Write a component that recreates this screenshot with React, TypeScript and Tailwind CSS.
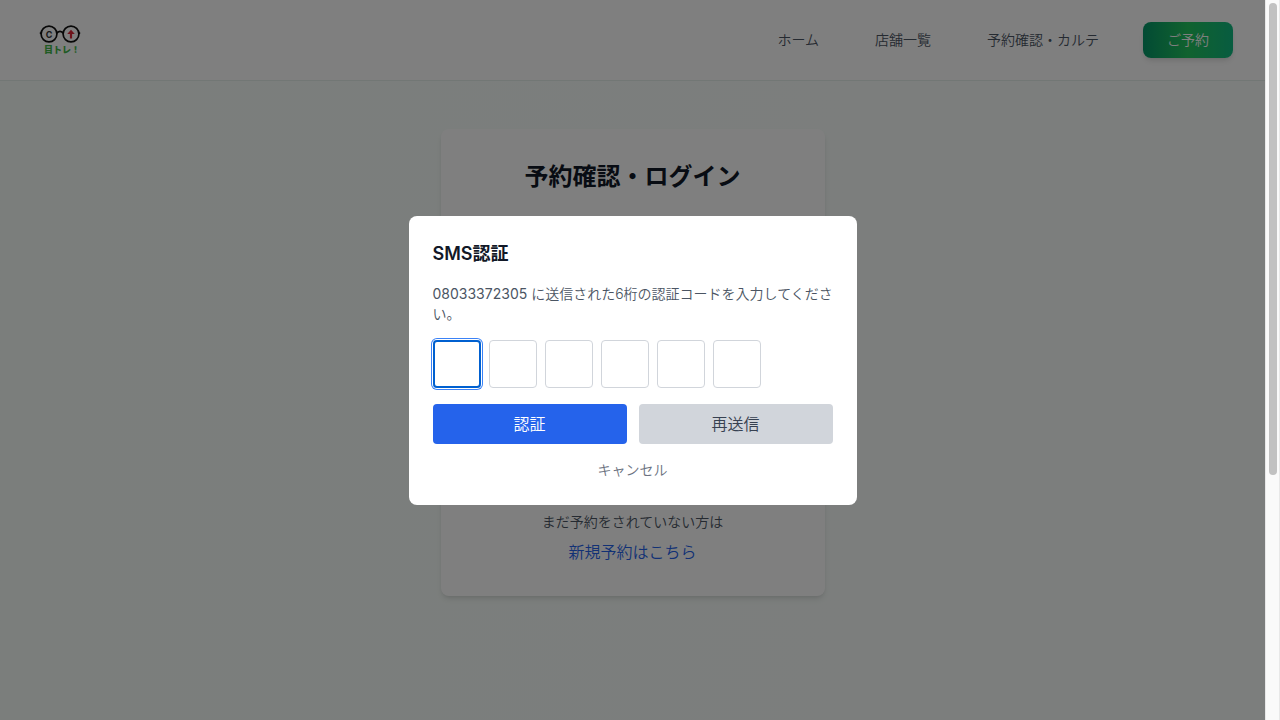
const navLinks = ['ホーム', '店舗一覧', '予約確認・カルテ'];

function Logo() {
  return (
    <svg viewBox="0 0 48 36" className="h-9 w-12" role="img" aria-label="目トレ！">
      <g fill="none" stroke="#111" strokeWidth="1.7">
        <circle cx="13" cy="12" r="7.9" />
        <circle cx="35" cy="12" r="7.9" />
        <path d="M20.8 11.3C22 8.6 26 8.6 27.2 11.3M5.2 11.2H3.8M42.8 11.2h1.4" />
      </g>
      <text x="13" y="15.6" textAnchor="middle" fontSize="9" fontWeight="700" fill="#333">
        C
      </text>
      <path d="M35 7.8l3.8 4.2h-2.7v4.4h-2.2V12h-2.7z" fill="#dc2637" />
      <text x="8" y="31" fontSize="9" fontWeight="900" fill="#42b649">
        目トレ！
      </text>
    </svg>
  );
}

function Header() {
  return (
    <header className="flex h-[81px] items-center justify-between border-b border-[#e5efea] bg-white px-8">
      <a href="#" className="pl-1">
        <Logo />
      </a>
      <nav className="flex items-center gap-8 text-sm text-[#4b5563]">
        {navLinks.map((label) => (
          <a key={label} href="#" className="px-3 py-2">
            {label}
          </a>
        ))}
        <button
          type="button"
          className="h-9 rounded-lg bg-[linear-gradient(to_right,#059669,#22c55e,#10b981)] px-6 text-white shadow-md"
        >
          ご予約
        </button>
      </nav>
    </header>
  );
}

function LoginCard() {
  return (
    <section className="flex min-h-[467px] w-96 flex-col justify-between rounded-lg bg-white p-8 text-center shadow-md">
      <h1 className="text-2xl font-bold text-[#111827]">予約確認・ログイン</h1>
      <div>
        <p className="mb-2 text-sm text-[#4b5563]">まだ予約をされていない方は</p>
        <a href="#" className="text-[#2563eb]">
          新規予約はこちら
        </a>
      </div>
    </section>
  );
}

function CodeInputs() {
  return (
    <div className="mb-4 flex gap-2">
      {[1, 2, 3, 4, 5, 6].map((n) => (
        <input
          key={n}
          type="text"
          inputMode="numeric"
          maxLength={1}
          aria-label={String(n)}
          className={
            n === 1
              ? 'size-12 rounded border-2 border-[#0060d0] text-center text-xl shadow-[0_0_0_1px_#fff,0_0_0_2px_#3b82f6] outline-none'
              : 'size-12 rounded border border-[#d1d5db] text-center text-xl outline-none'
          }
        />
      ))}
    </div>
  );
}

function SmsDialog() {
  return (
    <div className="absolute inset-0 flex items-center justify-center bg-black/50">
      <div
        role="dialog"
        aria-modal="true"
        aria-labelledby="sms-title"
        className="w-full max-w-md rounded-lg bg-white p-6"
      >
        <h2 id="sms-title" className="mb-4 text-lg font-semibold text-[#111827]">
          SMS認証
        </h2>
        <p className="mb-4 text-sm whitespace-nowrap text-[#4b5563]">
          <span className="font-normal">08033372305</span> に送信された6桁の認証コードを入力してくださ
          <br />
          い。
        </p>
        <CodeInputs />
        <div className="mb-4 flex gap-3">
          <button type="button" className="h-10 flex-1 rounded bg-[#2563eb] text-white">
            認証
          </button>
          <button type="button" className="h-10 flex-1 rounded bg-[#d1d5db] text-[#374151]">
            再送信
          </button>
        </div>
        <button type="button" className="block w-full pb-px text-sm text-[#6b7280]">
          キャンセル
        </button>
      </div>
    </div>
  );
}

function ScrollTrack() {
  return (
    <div className="w-[15px] shrink-0 border-x border-[#e8e8e8] bg-[#fafafa] px-[3px] pt-[3px]">
      <div className="h-[472px] w-2 rounded-full bg-[#c1c1c1]" />
    </div>
  );
}

export default function App() {
  return (
    <div className="flex h-screen font-['Inter','Noto_Sans_CJK_JP',sans-serif] font-[350]">
      <div className="relative min-w-0 flex-1 overflow-hidden bg-linear-to-r from-[#f6fdf9] to-[#f9fdfb]">
        <Header />
        <main className="flex justify-center py-12">
          <LoginCard />
        </main>
        <SmsDialog />
      </div>
      <ScrollTrack />
    </div>
  );
}
